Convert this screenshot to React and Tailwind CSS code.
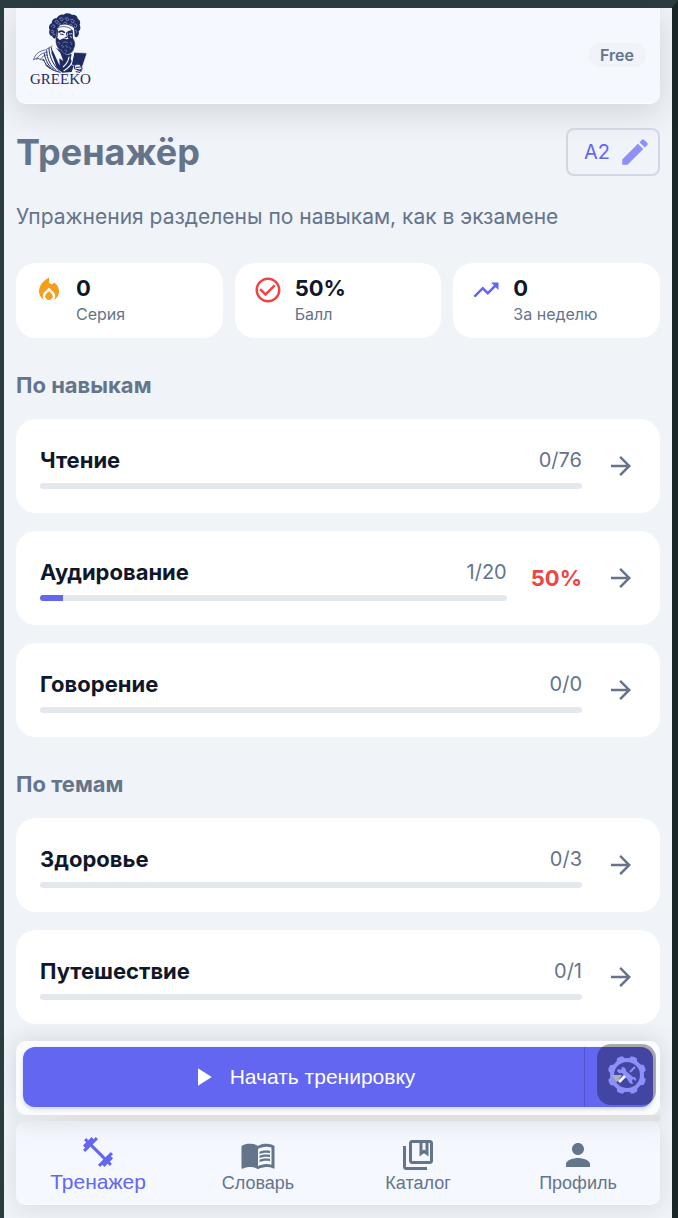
import React from 'react';
import {
  MdArrowForward,
  MdCheckCircleOutline,
  MdFitnessCenter,
  MdLocalFireDepartment,
  MdMenuBook,
  MdModeEdit,
  MdOutlineCollectionsBookmark,
  MdPerson,
  MdPlayArrow,
  MdTrendingUp,
} from 'react-icons/md';

const stats = [
  { label: 'Серия', value: '0', icon: MdLocalFireDepartment, color: 'text-[#f59e1b]' },
  { label: 'Балл', value: '50%', icon: MdCheckCircleOutline, color: 'text-[#ef4444]' },
  { label: 'За неделю', value: '0', icon: MdTrendingUp, color: 'text-[#6366f1]' },
];

const sections = [
  {
    title: 'По навыкам',
    items: [
      { name: 'Чтение', done: 0, total: 76 },
      { name: 'Аудирование', done: 1, total: 20, score: '50%' },
      { name: 'Говорение', done: 0, total: 0 },
    ],
  },
  {
    title: 'По темам',
    items: [
      { name: 'Здоровье', done: 0, total: 3 },
      { name: 'Путешествие', done: 0, total: 1 },
    ],
  },
];

const tabs = [
  { name: 'Тренажер', icon: MdFitnessCenter, active: true },
  { name: 'Словарь', icon: MdMenuBook },
  { name: 'Каталог', icon: MdOutlineCollectionsBookmark },
  { name: 'Профиль', icon: MdPerson },
];

function Bust() {
  return (
    <svg viewBox="56 26 162 180" className="h-[60px] w-[54px]" fill="none" stroke="#1f2b63" strokeLinecap="round" strokeLinejoin="round" aria-hidden="true">
      {/* hair */}
      <path fill="#1f2b63" stroke="none" d="M112 96c-8-4-9-14-6-20-5-8 0-17 6-19 0-10 8-16 15-15 4-9 14-13 21-11 8-7 20-5 25 1 9-2 17 4 17 11 8 4 9 13 6 18 4 8 2 16-3 20 2 8-1 15-6 18l-6-2-2-26c-9-10-30-14-42-8l-9 12-4 26c-4 4-9 0-12-8z" />
      <g stroke="#8d96b8" strokeWidth="2.500">
        <path d="M111 66c4-6 10-5 11-1s-4 6-6 3M121 52c4-6 11-4 11 1s-7 5-8 2M135 43c5-5 12-2 11 3s-8 4-8 1M152 42c5-4 12-1 11 4s-8 4-8 0M169 46c6-3 11 1 10 6s-8 4-8 0M181 59c6-1 8 5 5 9s-7 1-6-2M110 80c5-4 9-1 8 3s-6 4-7 1M183 77c5-1 6 5 3 8M131 61c4-5 10-3 10 1M148 56c5-4 10-2 10 3M166 60c4-2 8 1 8 5M115 92c2-4 6-4 7-1" />
      </g>
      {/* face */}
      <path fill="#f5f8ff" strokeWidth="2" d="M128 72c12-8 34-7 44 4l3 28-7 10-8-7-12 1-8 8-12-14z" />
      <path strokeWidth="5" d="M134 83c5-4 11-3 16 1M161 85c4-3 8-3 12-1" />
      <path strokeWidth="3" d="M138 89l9 2M163 91l7-1M156 85l3 14-7 1M130 76l-2 22" />
      <path fill="#1f2b63" stroke="none" d="M160 80l15-3v30l-9 2-5-9z" />
      <path stroke="#f5f8ff" strokeWidth="2.500" d="M165 89l7-1M168 97l4 2" />
      {/* beard */}
      <path fill="#1f2b63" strokeWidth="2" d="M126 99c5 4 8 9 12 9 7-6 14-5 19-2 6-3 13-1 18-4 7 10 8 22 3 30-2 10-11 18-20 17-10 0-18-6-22-14-9-8-13-22-10-36z" />
      <g stroke="#8d96b8" strokeWidth="2">
        <path d="M145 115c5-3 10-3 15 0M131 114c5-1 7 4 3 7M141 124c5-2 8 2 5 6M154 124c4-1 7 3 4 6M168 114c5 0 6 4 3 7M138 137c5-1 7 3 5 6M152 137c5-1 6 4 3 7M166 129c4 1 4 5 1 7" />
      </g>
      {/* robe */}
      <path fill="#1f2b63" stroke="none" d="M139 138c8 13 20 16 33 10l-3 16 10 18-7 21-28 2-17-15-16-45 9-16z" />
      <path fill="#f5f8ff" stroke="none" d="M118 123l-4 13 22 48-1-22 12 8-9-24z" />
      <path strokeWidth="2" d="M58 166c4-17 18-27 35-29l20-12M67 166c5-15 20-22 31-22M78 165c7-10 14-14 21-13M58 166l10-5 12 5 11 3" />
      <path strokeWidth="3" d="M104 132c0 22 11 48 31 68M97 139c0 24 12 47 29 60M90 148c3 20 13 38 27 48M86 164c6 13 13 22 22 28M111 130c2 20 14 45 32 66" />
      <path stroke="#f5f8ff" strokeWidth="3.500" d="M178 160c-4 18-15 31-29 39M164 158c-2 12-8 22-17 29" />
      <path strokeWidth="3" d="M94 182c12 11 26 19 44 22" />
      {/* book */}
      <path fill="#1f2b63" stroke="#f5f8ff" strokeWidth="2" d="M180 144l38 2-14 42-32-6z" />
      <path fill="#f5f8ff" strokeWidth="3" d="M181 183c9-5 16-3 19 2l4 9-9 3-13-3z" />
      <path strokeWidth="3" d="M185 189l14-1M190 197l12 2-5 5-12-2" />
    </svg>
  );
}

function GearIcon() {
  const teeth = [22, 67, 112, 157, 202, 247, 292, 337];
  return (
    <svg viewBox="0 0 40 40" className="size-10" aria-hidden="true">
      <g fill="#8e90fa">
        {teeth.map((angle) => (
          <path key={angle} d="M15 5l2-4q3-1 6 0l2 4z" transform={`rotate(${angle} 20 20)`} />
        ))}
      </g>
      <circle cx="20" cy="20" r="15" fill="none" stroke="#8e90fa" strokeWidth="4" />
      {/* wrench */}
      <path fill="#8e90fa" d="M12 14l2 1 1-3q4 0 4 4l7 6q4 0 3 4l-3-2-1 2 1 3q-4 0-5-4l-6-7q-4 1-5-3z" />
      {/* screwdriver */}
      <path d="M28 12l-5 5" stroke="#8e90fa" strokeWidth="2" />
      <path d="M5 20h10l-4 6-2 1z" fill="#b0afb4" />
      <path d="M18 21l-6 6" stroke="#f5f5ff" strokeWidth="3" />
    </svg>
  );
}

function Header() {
  return (
    <header className="flex h-24 items-start justify-between rounded-b-[10px] border-b border-white bg-[#f5f8ff] px-3.5 shadow-[0_8px_32px_rgba(31,38,50,0.15)]">
      <a href="#home" className="flex flex-col items-center pt-[5px] text-[#1f2b63]">
        <Bust />
        <span className="font-['Liberation_Serif',serif] text-[15px] leading-3">GREEKO</span>
      </a>
      <span className="mt-[35px] rounded-full bg-[#f0f3f8] px-3 text-base leading-6 font-semibold text-[#64748b]">Free</span>
    </header>
  );
}

function StatCard({ stat }) {
  const Icon = stat.icon;
  return (
    <div className="flex items-start gap-3 rounded-[20px] bg-white px-[18px] py-3">
      <Icon size={30} className={stat.color} />
      <div>
        <div className="text-[22px] leading-[27px] font-bold text-[#0f172a]">{stat.value}</div>
        <div className="text-base leading-6">{stat.label}</div>
      </div>
    </div>
  );
}

function SkillCard({ item }) {
  const percent = item.total ? (item.done / item.total) * 100 : 0;
  return (
    <button type="button" className="flex w-full items-center gap-6 rounded-[20px] bg-white p-6 text-left">
      <span className="flex flex-1 flex-col gap-1.5">
        <span className="flex items-center justify-between leading-[34px]">
          <span className="text-[22px] font-bold text-[#0f172a]">{item.name}</span>
          <span className="text-xl leading-[34px]">{item.done}/{item.total}</span>
        </span>
        <span className="block h-1.5 overflow-hidden rounded-full bg-[#e2e8ee]">
          <span className="block h-full bg-[#6366f1]" style={{ width: `${percent}%` }} />
        </span>
      </span>
      {item.score && <span className="text-[22px] font-bold text-[#ef4444]">{item.score}</span>}
      <MdArrowForward size={30} />
    </button>
  );
}

function StartBar() {
  return (
    <div className="relative rounded-[10px] bg-[#fbfcff] px-[7px] pt-1.5 pb-2 shadow-[0_0_24px_rgba(31,38,50,0.14)]">
      <div className="flex h-[60px] overflow-hidden rounded-xl bg-[#6366f1] font-['Liberation_Sans',sans-serif] text-white shadow-[0_2px_4px_rgba(31,38,50,0.2)]">
        <button type="button" className="flex flex-1 items-center justify-center gap-3 border-r border-[#5255cf] pr-1 text-[21px]">
          <MdPlayArrow size={30} />
          Начать тренировку
        </button>
        <button type="button" aria-label="Другие варианты" className="w-[68px]" />
      </div>
      {/* settings button floats over the end of the bar */}
      <button type="button" aria-label="Настройки" className="absolute top-[3px] right-1 flex h-[61px] w-[59px] items-center justify-center rounded-[14px] bg-black/32">
        <GearIcon />
      </button>
    </div>
  );
}

function TabBar() {
  return (
    <nav className="grid h-[84px] grid-cols-4 rounded-[10px] border-b border-white bg-linear-to-b from-[#f0f3f8] to-[#f5f8ff] to-40% px-0.5 font-['Liberation_Sans',sans-serif] shadow-[0_4px_24px_rgba(31,38,50,0.1)]">
      {tabs.map(({ name, icon: Icon, active }) => (
        <a
          key={name}
          href={`#${name}`}
          className={active
            ? 'flex flex-col items-center justify-center pt-0.5 text-[21px] leading-6 text-[#6366f1]'
            : 'flex flex-col items-center justify-center pt-1 text-lg leading-5'}
        >
          <Icon size={36} />
          {name}
        </a>
      ))}
    </nav>
  );
}

export default function App() {
  return (
    <div className="min-h-screen border-t-8 border-r-6 border-l-4 border-t-[#2a3d40] border-r-[#1b2628] border-l-[#2a3d40] bg-[#f0f3f8] px-3 pb-[13px] font-['Inter',sans-serif] text-[#64748b]">
      <Header />

      <main>
        <div className="mt-6 flex items-center justify-between">
          <h1 className="text-4xl font-bold">Тренажёр</h1>
          <button type="button" className="flex h-12 items-center gap-2 rounded-lg border-2 border-[#d3d6e3] pr-1.5 pl-4 text-xl text-[#6366f1]">
            A2
            <MdModeEdit size={34} className="text-[#8e90f6]" />
          </button>
        </div>
        <p className="mt-[26px] text-[21px] leading-[30px]">Упражнения разделены по навыкам, как в экзамене</p>

        <div className="mt-[31px] grid grid-cols-3 gap-3">
          {stats.map((stat) => <StatCard key={stat.label} stat={stat} />)}
        </div>

        {sections.map((section) => (
          <section key={section.title} className="mt-[31px]">
            <h2 className="mb-[18px] text-[22px] leading-8 font-bold">{section.title}</h2>
            <div className="flex flex-col gap-[18px]">
              {section.items.map((item) => <SkillCard key={item.name} item={item} />)}
            </div>
          </section>
        ))}
      </main>

      <footer className="mt-[17px]">
        <StartBar />
        {/* sits above the shadows of both bars */}
        <div className="relative h-1.5 bg-linear-to-r from-[#e6e9ee] via-[#e0e0e0] via-10% to-[#e0e0e0]" />
        <TabBar />
      </footer>
    </div>
  );
}
